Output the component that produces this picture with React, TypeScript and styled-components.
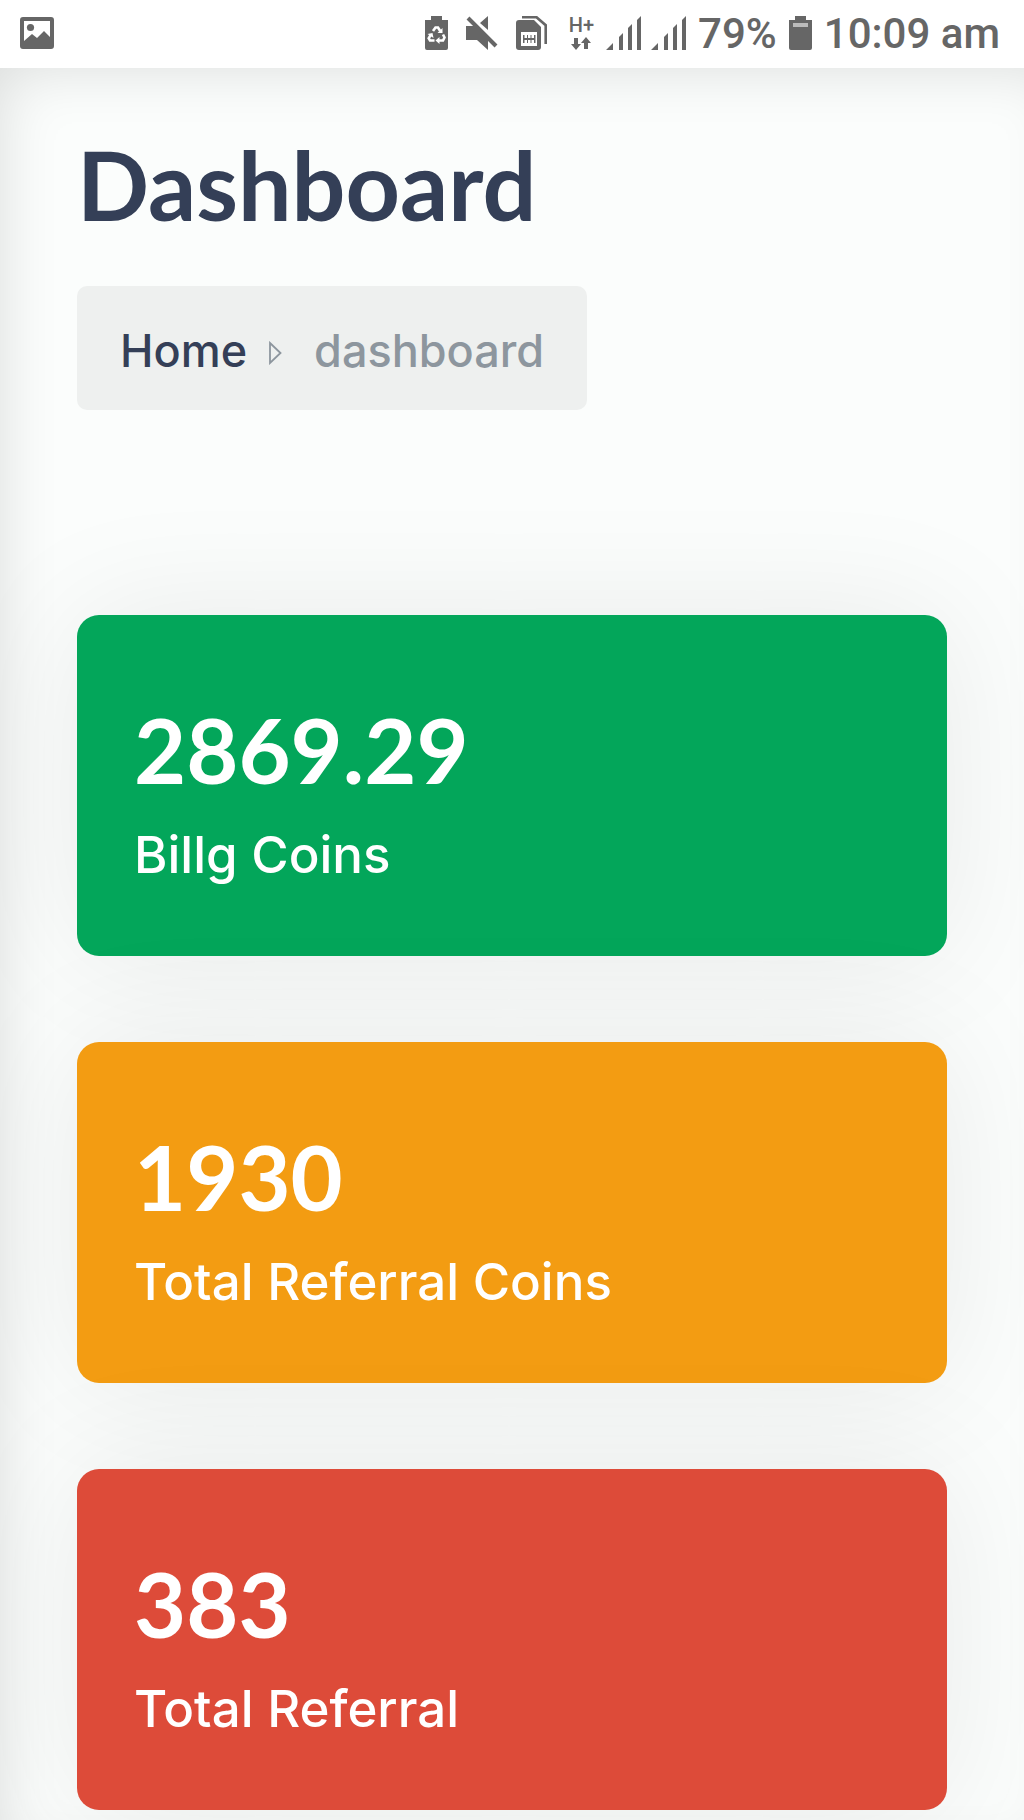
import React from "react";
import styled, { createGlobalStyle } from "styled-components";

const GlobalStyle = createGlobalStyle`
  *, *::before, *::after { box-sizing: border-box; }
  body { margin: 0; background: #fbfdfc; }
`;

const uiFont = `Inter, "Liberation Sans", sans-serif`;
const headingFont = `Lato, "Open Sans", sans-serif`;

const Screen = styled.div`
  min-height: 100vh;
  display: flex;
  flex-direction: column;
  overflow: hidden;
  font-family: ${uiFont};
`;

const StatusBar = styled.header`
  display: flex;
  align-items: center;
  justify-content: space-between;
  height: 68px;
  padding: 0 24px 2px 20px;
  background: #ffffff;
  color: #666666;
  font-family: Roboto, "Liberation Sans", sans-serif;
`;

const StatusGroup = styled.div`
  display: flex;
  align-items: center;
  gap: 12px;
`;

const DeviceIcons = styled.div`
  display: flex;
  align-items: center;
  gap: 18px;
  margin-right: 10px;
`;

const SignalIcons = styled.div`
  display: flex;
  align-items: center;
  gap: 10px;
`;

const StatusText = styled.span`
  padding-top: 2px;
  font-size: 42px;
  line-height: 48px;
  font-weight: 500;
  white-space: nowrap;
`;

const Network = styled.span`
  display: flex;
  flex-direction: column;
  align-items: center;
  gap: 2px;
  margin-right: 2px;
  font-size: 20px;
  line-height: 19px;
  font-weight: 500;
`;

const Page = styled.main`
  flex: 1;
  padding: 64px 77px 10px;
  box-shadow: inset 20px 20px 60px -20px rgba(0, 0, 0, 0.13);
`;

const Title = styled.h1`
  margin: 0;
  font-family: ${headingFont};
  font-size: 95px;
  line-height: 104px;
  font-weight: 700;
  color: #343f57;
`;

const Breadcrumb = styled.nav`
  width: fit-content;
  margin-top: 50px;
  padding: 41px 43px 35px;
  border-radius: 10px;
  background: #eef0ef;
  font-size: 45px;
  line-height: 48px;
  font-weight: 500;
`;

const Crumbs = styled.ol`
  display: flex;
  align-items: center;
  margin: 0;
  padding: 0;
  list-style: none;
`;

const Crumb = styled.li`
  display: flex;
  align-items: center;
  color: #8d969e;
`;

const CrumbLink = styled.a`
  color: #343f57;
  text-decoration: none;
`;

const Separator = styled.svg`
  margin: 4px 32px 0 22px;
`;

const Cards = styled.section`
  display: grid;
  gap: 86px;
  margin-top: 205px;
`;

const Card = styled.article<{ $color: string }>`
  height: 341px;
  padding: 80px 57px;
  border-radius: 22px;
  background: ${(p) => p.$color};
  box-shadow: 0 0 130px rgba(0, 0, 0, 0.08);
  color: #ffffff;
`;

const Value = styled.p`
  margin: 0;
  font-family: ${headingFont};
  font-size: 90px;
  line-height: 108px;
  font-weight: 700;
`;

const Label = styled.h2`
  margin: 22px 0 0;
  font-size: 51px;
  line-height: 60px;
  font-weight: 500;
`;

const PictureIcon = () => (
  <svg width="34" height="32" viewBox="0 0 34 32" aria-hidden="true">
    <path
      fill="#666"
      fillRule="evenodd"
      d="M3 0h28a3 3 0 0 1 3 3v26a3 3 0 0 1-3 3H3a3 3 0 0 1-3-3V3a3 3 0 0 1 3-3ZM4 4v20l8-7 5 4 7-7 6 6V4Z"
    />
    <circle cx="10.500" cy="10.500" r="3.600" fill="#666" />
  </svg>
);

const RecycleBatteryIcon = () => (
  <svg width="23" height="34" viewBox="0 0 23 34" aria-hidden="true">
    <path fill="#666" d="M6 0h11v4h6v28a2 2 0 0 1-2 2H2a2 2 0 0 1-2-2V4h6Z" />
    <g fill="none" stroke="#fff" strokeWidth="2.600">
      <path d="M8 15l2.500-3.500h2.500l2.200 3.500" />
      <path d="M18 18.500l1.500 3-1.500 3h-4.500" />
      <path d="M9.500 24.500H5l-1.300-2.200L6 18.500" />
    </g>
    <path fill="#fff" d="M17.500 12v5h-5ZM14.500 21v7l-4-3.500ZM2.500 18l5-1 1 5Z" />
  </svg>
);

const MutedIcon = () => (
  <svg width="32" height="34" viewBox="0 0 32 34" aria-hidden="true">
    <path fill="#666" d="M0 10h9l13 12v12L11 24H0ZM22 0v14l-8-7Z" />
    <path d="M2 2l28 28" stroke="#666" strokeWidth="4" />
  </svg>
);

const SimIcon = () => (
  <svg width="31" height="34" viewBox="0 0 31 34" aria-hidden="true">
    <path d="M6 1.200h14.500l9.200 8V28" fill="none" stroke="#666" strokeWidth="2.600" />
    <path fill="#666" d="M3 4h15l7 7v20a3 3 0 0 1-3 3H3a3 3 0 0 1-3-3V7a3 3 0 0 1 3-3Z" />
    <path
      fill="#fff"
      fillRule="evenodd"
      d="M5 16h16v14H5ZM7 19v8h1.500v-8ZM11 19v8h1v-8ZM14.500 19v8h1v-8ZM18 19v8h1.500v-8Z"
    />
    <path d="M7 23h12" stroke="#666" strokeWidth="2" />
  </svg>
);

const DataArrowsIcon = () => (
  <svg width="20" height="13" viewBox="0 0 20 13" aria-hidden="true">
    <path fill="#666" d="M3 1h4v6h3l-5 6-5-6h3ZM13 12h4V6h3l-5-6-5 6h3Z" />
  </svg>
);

const SignalIcon = () => (
  <svg width="35" height="34" viewBox="0 0 35 34" aria-hidden="true">
    <path
      fill="#666"
      d="M0 34l7-7v7ZM13 21l4-4v17h-4ZM22 12l4-4v26h-4ZM31 4l4-4v34h-4Z"
    />
  </svg>
);

const BatteryIcon = () => (
  <svg width="23" height="34" viewBox="0 0 23 34" aria-hidden="true">
    <path fill="#666" d="M6 0h11v4h6v28a2 2 0 0 1-2 2H2a2 2 0 0 1-2-2V4h6Z" />
    <path fill="#bbb" d="M4 7h15v4H4Z" />
  </svg>
);

const stats = [
  { value: "2869.29", label: "Billg Coins", color: "#03a65a" },
  { value: "1930", label: "Total Referral Coins", color: "#f39c12" },
  { value: "383", label: "Total Referral", color: "#dd4b39" },
];

export default function App() {
  return (
    <>
      <GlobalStyle />
      <Screen>
        <StatusBar>
          <PictureIcon />
          <StatusGroup>
            <DeviceIcons>
              <RecycleBatteryIcon />
              <MutedIcon />
              <SimIcon />
            </DeviceIcons>
            <SignalIcons>
              <Network>
                H+
                <DataArrowsIcon />
              </Network>
              <SignalIcon />
              <SignalIcon />
            </SignalIcons>
            <StatusText>79%</StatusText>
            <BatteryIcon />
            <StatusText>10:09 am</StatusText>
          </StatusGroup>
        </StatusBar>
        <Page>
          <Title>Dashboard</Title>
          <Breadcrumb aria-label="Breadcrumb">
            <Crumbs>
              <Crumb>
                <CrumbLink href="#home">Home</CrumbLink>
                <Separator width="13" height="24" viewBox="0 0 13 24" aria-hidden="true">
                  <path d="M1 2l10.500 10L1 22Z" fill="none" stroke="#8d969e" strokeWidth="1.800" />
                </Separator>
              </Crumb>
              <Crumb aria-current="page">dashboard</Crumb>
            </Crumbs>
          </Breadcrumb>
          <Cards>
            {stats.map((s) => (
              <Card key={s.label} $color={s.color}>
                <Value>{s.value}</Value>
                <Label>{s.label}</Label>
              </Card>
            ))}
          </Cards>
        </Page>
      </Screen>
    </>
  );
}
